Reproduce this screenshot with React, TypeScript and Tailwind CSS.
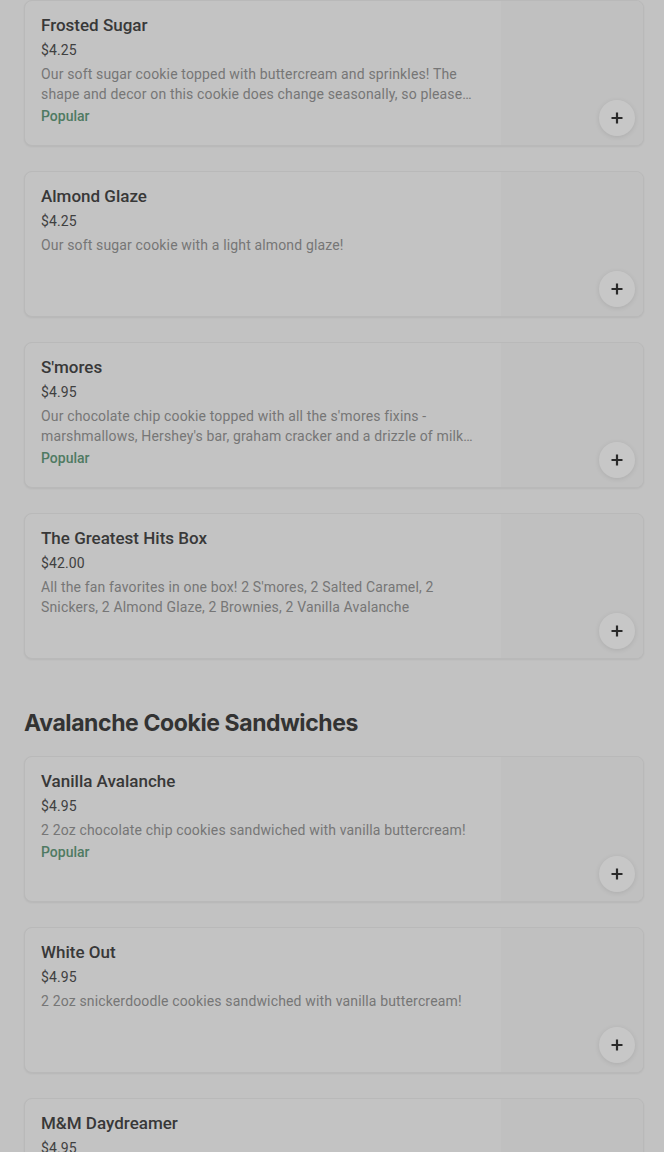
import React from "react";

type Item = { name: string; price: string; desc: string; popular?: boolean };

const group1: Item[] = [
  {
    name: "Frosted Sugar",
    price: "$4.25",
    desc: "Our soft sugar cookie topped with buttercream and sprinkles! The shape and decor on this cookie does change seasonally, so please expect something fun and festive each time you order!",
    popular: true,
  },
  { name: "Almond Glaze", price: "$4.25", desc: "Our soft sugar cookie with a light almond glaze!" },
  {
    name: "S'mores",
    price: "$4.95",
    desc: "Our chocolate chip cookie topped with all the s'mores fixins - marshmallows, Hershey's bar, graham cracker and a drizzle of milk chocolate on top!",
    popular: true,
  },
  {
    name: "The Greatest Hits Box",
    price: "$42.00",
    desc: "All the fan favorites in one box! 2 S'mores, 2 Salted Caramel, 2 Snickers, 2 Almond Glaze, 2 Brownies, 2 Vanilla Avalanche",
  },
];

const group2: Item[] = [
  {
    name: "Vanilla Avalanche",
    price: "$4.95",
    desc: "2 2oz chocolate chip cookies sandwiched with vanilla buttercream!",
    popular: true,
  },
  { name: "White Out", price: "$4.95", desc: "2 2oz snickerdoodle cookies sandwiched with vanilla buttercream!" },
  { name: "M&M Daydreamer", price: "$4.95", desc: "2 2oz M&M cookies sandwiched with vanilla buttercream!" },
];

function Card({ item }: { item: Item }) {
  return (
    <div className="relative flex h-[146px] rounded-[8px] border border-[#b9b9b9] bg-[#c3c3c3] shadow-[0_1px_2px_rgba(0,0,0,0.06)] overflow-hidden">
      <div className="flex-1 pl-4 pr-4 pt-[12px]">
        <div className="text-[17px] leading-[24px] font-medium text-[#383838]">{item.name}</div>
        <div className="mt-[3px] text-[14px] leading-[20px] text-[#404040] tracking-[0.1px]">{item.price}</div>
        <div className="mt-[4px] w-[440px] text-[14px] leading-[20px] text-[#767676] tracking-[0.15px] line-clamp-2">{item.desc}</div>
        {item.popular && (
          <div className="mt-[2px] text-[14px] leading-[20px] font-medium text-[#4f7a62]">Popular</div>
        )}
      </div>
      <div className="w-[142px] shrink-0 bg-[#c0c0c0]" />
      <div className="absolute right-[8px] bottom-[9px] flex h-[36px] w-[36px] items-center justify-center rounded-full bg-[#c7c7c7] shadow-[0_1px_5px_rgba(0,0,0,0.1)]">
        <svg width="12" height="12" viewBox="0 0 12 12">
          <path d="M6 0.5v11M0.5 6h11" stroke="#2a2a2a" strokeWidth="2.2" />
        </svg>
      </div>
    </div>
  );
}

export default function App() {
  return (
    <div
      className="min-h-[1152px] w-[664px] bg-[#c2c2c2] pl-[24px] pr-[20px] overflow-hidden"
      style={{ fontFamily: "Roboto, 'Liberation Sans', sans-serif" }}
    >
      <div className="flex flex-col gap-[25px]">
        {group1.map((it) => (
          <Card key={it.name} item={it} />
        ))}
      </div>
      <h2
        className="mt-[47px] mb-[16px] text-[23px] leading-[34px] font-bold text-[#333333] tracking-[-0.4px]"
        style={{ fontFamily: "Inter, 'Liberation Sans', sans-serif" }}
      >
        Avalanche Cookie Sandwiches
      </h2>
      <div className="flex flex-col gap-[25px]">
        {group2.map((it) => (
          <Card key={it.name} item={it} />
        ))}
      </div>
    </div>
  );
}
